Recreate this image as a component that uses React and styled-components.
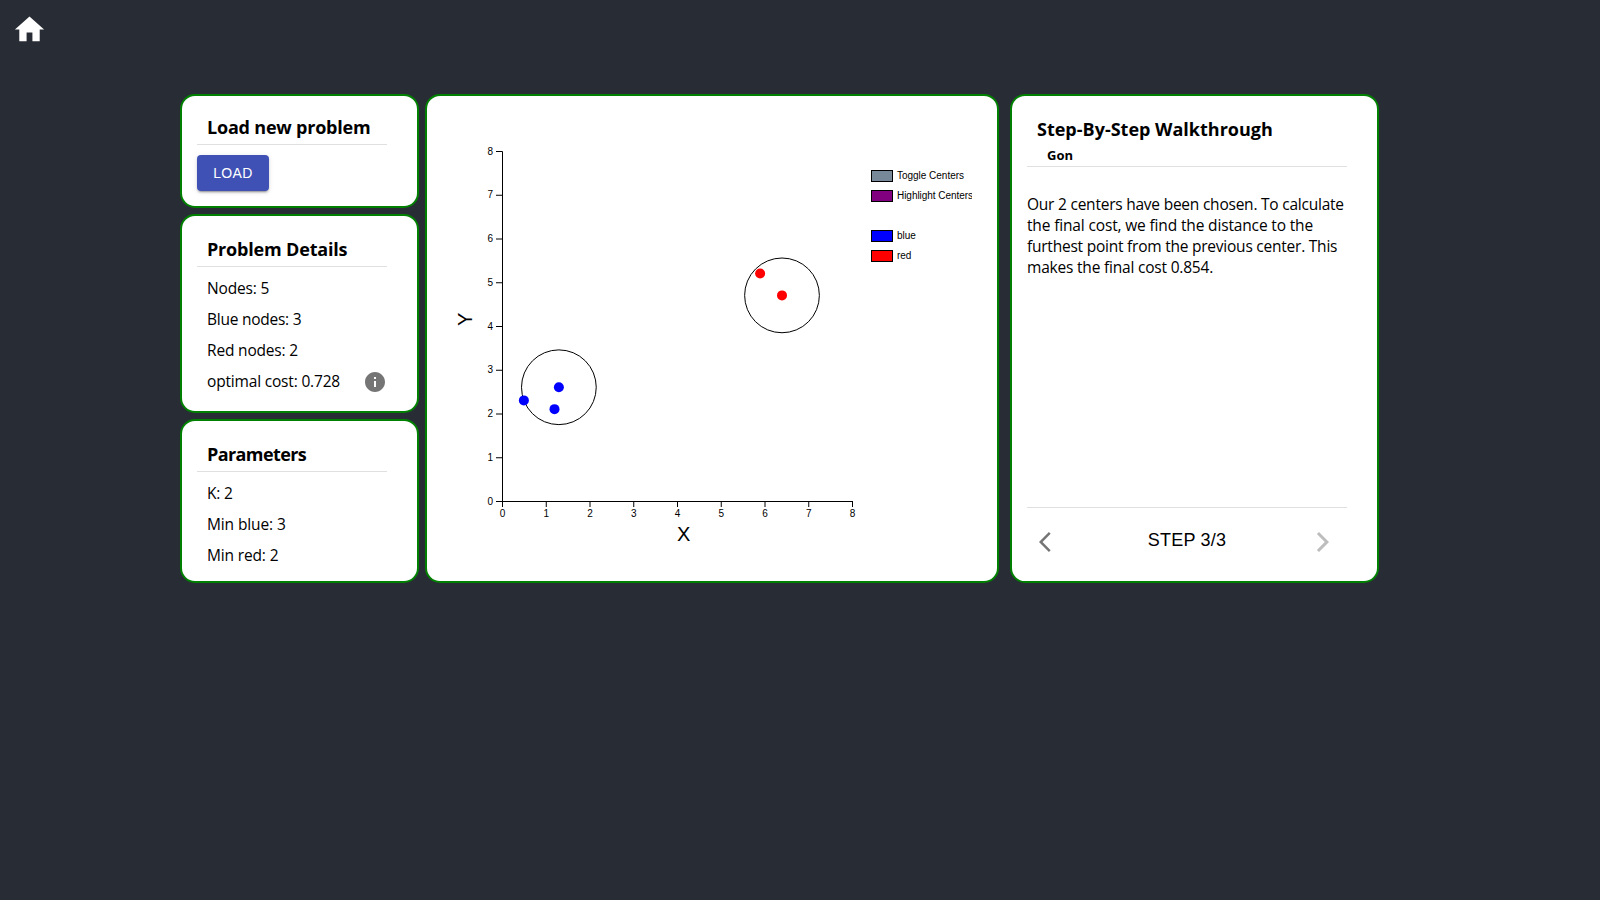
import React from 'react';
import styled, { createGlobalStyle } from 'styled-components';

const GlobalStyle = createGlobalStyle`
  body {
    margin: 0;
    background: #282c34;
    color: #000;
    font-family: 'Open Sans', 'Noto Sans', sans-serif;
  }
`;

const Page = styled.div`
  min-height: 100vh;
  box-sizing: border-box;
`;

const TopBar = styled.header`
  height: 94px;
  box-sizing: border-box;
  padding: 12px;
`;

const Icon = styled.svg`
  display: block;
  flex: none;
  width: ${(p) => p.$size || 24}px;
  height: ${(p) => p.$size || 24}px;
  fill: ${(p) => p.$color || 'rgba(0, 0, 0, 0.54)'};
`;

const Board = styled.main`
  display: flex;
  margin-left: 180px;
  height: 489px;
`;

const Sidebar = styled.div`
  display: flex;
  flex-direction: column;
  gap: 6px;
  width: 239px;
  margin-right: 6px;
`;

const Card = styled.section`
  box-sizing: border-box;
  height: ${(p) => p.$height}px;
  padding: ${(p) => p.$top ?? 21}px 30px 0 15px;
  background: #fff;
  border: 2px solid green;
  border-radius: 15px;
`;

const ChartCard = styled(Card)`
  width: 574px;
  margin-right: 11px;
  padding: 15px 15px 0;
`;

const StepCard = styled(Card)`
  display: flex;
  flex-direction: column;
  width: 369px;
`;

const Title = styled.h3`
  height: ${(p) => p.$height || 29}px;
  margin: 0;
  padding-left: 10px;
  font-size: 18px;
  font-weight: 700;
  line-height: 25px;
  letter-spacing: ${(p) => p.$tracking || 0}px;
  white-space: nowrap;
`;

const Subtitle = styled.h5`
  height: 21px;
  margin: 0;
  padding: 4px 0 0 20px;
  font-size: 13px;
  font-weight: 700;
  line-height: 20px;
`;

const Divider = styled.hr`
  width: 100%;
  height: 1px;
  margin: 0;
  border: 0;
  background: #e0e0e0;
`;

const LoadButton = styled.button`
  display: block;
  width: 72px;
  height: 36px;
  margin-top: 10px;
  padding: 0;
  border: 0;
  border-radius: 4px;
  background: #3f51b5;
  color: #fff;
  font: 14px/24px 'Liberation Sans', Arial, sans-serif;
  letter-spacing: 0.4px;
  box-shadow: 0 3px 1px -2px rgba(0, 0, 0, 0.2), 0 2px 2px 0 rgba(0, 0, 0, 0.14),
    0 1px 5px 0 rgba(0, 0, 0, 0.12);
`;

const Details = styled.div`
  padding: 5px 0 0 10px;
`;

const Detail = styled.div`
  display: flex;
  align-items: center;
  justify-content: space-between;
  height: 31px;
  font-size: 15.5px;
  letter-spacing: ${(p) => p.$tracking ?? -0.18}px;
  white-space: nowrap;
`;

const InfoIcon = styled(Icon)`
  margin-top: 3px;
`;

const Explanation = styled.p`
  flex: 1;
  margin: 27px 0 0;
  font-size: 15.5px;
  line-height: 21px;
  white-space: nowrap;
`;

const TextLine = styled.span`
  display: block;
  letter-spacing: ${(p) => p.$tracking || 0}px;
`;

const Stepper = styled.nav`
  display: flex;
  justify-content: space-between;
  height: 73px;
  box-sizing: border-box;
  padding-top: 10px;
`;

const IconButton = styled.button`
  display: block;
  height: 48px;
  padding: 12px;
  border: 0;
  background: none;
`;

const StepLabel = styled.span`
  padding-top: 12px;
  font: 18px/21px 'Liberation Sans', Arial, sans-serif;
  letter-spacing: 0.25px;
`;

const Chart = styled.svg`
  display: block;
  font-family: 'Liberation Sans', Arial, sans-serif;
  font-size: 10px;
`;

const UNIT = 43.75;
const SIZE = 350;
const TICKS = [0, 1, 2, 3, 4, 5, 6, 7, 8];
const px = (v) => v * UNIT;
const py = (v) => SIZE - v * UNIT;

const POINTS = [
  { x: 1.3, y: 2.6, color: 'blue' },
  { x: 0.5, y: 2.3, color: 'blue' },
  { x: 1.2, y: 2.1, color: 'blue' },
  { x: 5.9, y: 5.2, color: 'red' },
  { x: 6.4, y: 4.7, color: 'red' },
];

const CENTERS = [
  { x: 1.3, y: 2.6 },
  { x: 6.4, y: 4.7 },
];

const LEGEND = [
  { y: 0, color: 'lightslategray', label: 'Toggle Centers', width: 67 },
  { y: 20, color: 'purple', label: 'Highlight Centers', width: 76 },
  { y: 60, color: 'blue', label: 'blue', width: 18.8 },
  { y: 80, color: 'red', label: 'red', width: 14.3 },
];

function ScatterPlot() {
  return (
    <Chart width="530" height="450" viewBox="0 0 530 450">
      <g transform="translate(60,40)">
        <g fill="none" stroke="#000">
          <path d="M-6,0.5H0.5V350.5H-6" />
          <path d="M0.5,356V350.5H350.5V356" />
          {TICKS.map((t) => (
            <g key={t}>
              <line x1={-6} x2={0} y1={py(t) + 0.5} y2={py(t) + 0.5} />
              <line x1={px(t) + 0.5} x2={px(t) + 0.5} y1={350} y2={356} />
            </g>
          ))}
        </g>
        {TICKS.map((t) => (
          <g key={t}>
            <text x={-9} y={py(t) + 0.5} dy="0.32em" textAnchor="end">{t}</text>
            <text x={px(t) + 0.5} y={359} dy="0.71em" textAnchor="middle">{t}</text>
          </g>
        ))}
        {CENTERS.map((c) => (
          <circle key={c.x} cx={px(c.x)} cy={py(c.y)} r={px(0.854)} fill="none" stroke="#000" />
        ))}
        {POINTS.map((p) => (
          <circle key={p.x} cx={px(p.x)} cy={py(p.y)} r={5} fill={p.color} />
        ))}
        <text x={175} y={390} fontSize="20">X</text>
        <text transform="translate(-30,175) rotate(-90)" fontSize="20">Y</text>
        {LEGEND.map((l) => (
          <g key={l.label} transform={`translate(369,${l.y + 19})`}>
            <rect x={0.5} y={0.5} width={21} height={11} fill={l.color} stroke="#000" />
            <text x={26} y={9.4} textLength={l.width}>{l.label}</text>
          </g>
        ))}
      </g>
    </Chart>
  );
}

export default function App() {
  return (
    <Page>
      <GlobalStyle />
      <TopBar>
        <Icon viewBox="0 0 24 24" $size={35} $color="#fff">
          <path d="M10 20v-6h4v6h5v-8h3L12 3 2 12h3v8z" />
        </Icon>
      </TopBar>
      <Board>
        <Sidebar>
          <Card $height={114} $top={19}>
            <Title $tracking={-0.2}>Load new problem</Title>
            <Divider />
            <LoadButton>LOAD</LoadButton>
          </Card>
          <Card $height={199}>
            <Title $tracking={-0.18}>Problem Details</Title>
            <Divider />
            <Details>
              <Detail>Nodes: 5</Detail>
              <Detail $tracking={-0.25}>Blue nodes: 3</Detail>
              <Detail>Red nodes: 2</Detail>
              <Detail>
                optimal cost: 0.728
                <InfoIcon viewBox="0 0 24 24">
                  <path d="M12 2C6.48 2 2 6.48 2 12s4.48 10 10 10 10-4.48 10-10S17.52 2 12 2zm1 15h-2v-6h2v6zm0-8h-2V7h2v2z" />
                </InfoIcon>
              </Detail>
            </Details>
          </Card>
          <Card $height={164}>
            <Title $tracking={-0.6}>Parameters</Title>
            <Divider />
            <Details>
              <Detail>K: 2</Detail>
              <Detail $tracking={-0.12}>Min blue: 3</Detail>
              <Detail $tracking={-0.15}>Min red: 2</Detail>
            </Details>
          </Card>
        </Sidebar>
        <ChartCard $height={489}>
          <ScatterPlot />
        </ChartCard>
        <StepCard $height={489}>
          <Title $height={24}>Step-By-Step Walkthrough</Title>
          <Subtitle>Gon</Subtitle>
          <Divider />
          <Explanation>
            <TextLine $tracking={-0.23}>Our 2 centers have been chosen. To calculate</TextLine>
            <TextLine $tracking={-0.15}>the final cost, we find the distance to the</TextLine>
            <TextLine $tracking={-0.23}>furthest point from the previous center. This</TextLine>
            <TextLine $tracking={-0.2}>makes the final cost 0.854.</TextLine>
          </Explanation>
          <Divider />
          <Stepper>
            <IconButton aria-label="Previous step">
              <Icon viewBox="0 0 24 24">
                <path d="M11.67 3.87L9.9 2.1 0 12l9.9 9.9 1.77-1.77L3.54 12z" />
              </Icon>
            </IconButton>
            <StepLabel>STEP 3/3</StepLabel>
            <IconButton aria-label="Next step" disabled>
              <Icon viewBox="0 0 24 24" $color="rgba(0, 0, 0, 0.26)">
                <path d="M5.88 4.12L13.76 12l-7.88 7.88L8 22l10-10L8 2z" />
              </Icon>
            </IconButton>
          </Stepper>
        </StepCard>
      </Board>
    </Page>
  );
}
